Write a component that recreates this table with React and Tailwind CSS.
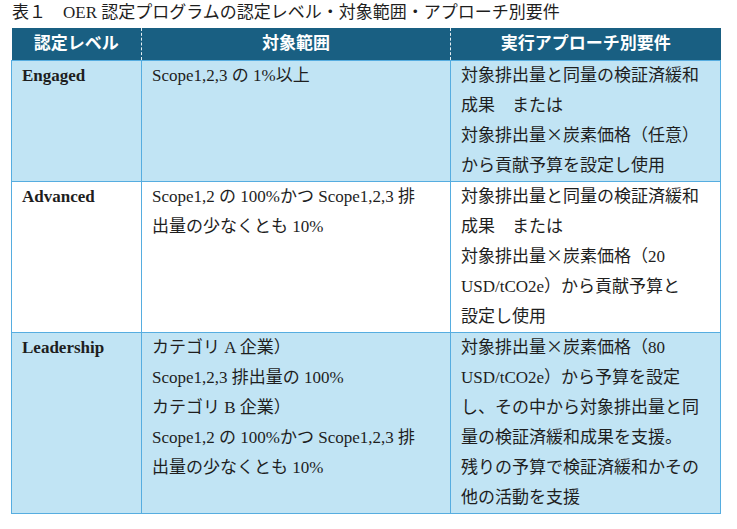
import React from 'react';

const rows = [
  {
    level: 'Engaged',
    bg: 'bg-[#c1e4f4]',
    scope: ['Scope1,2,3 の 1%以上'],
    approach: [
      '対象排出量と同量の検証済緩和',
      '成果　または',
      '対象排出量×炭素価格（任意）',
      'から貢献予算を設定し使用',
    ],
  },
  {
    level: 'Advanced',
    bg: 'bg-white',
    scope: ['Scope1,2 の 100%かつ Scope1,2,3 排', '出量の少なくとも 10%'],
    approach: [
      '対象排出量と同量の検証済緩和',
      '成果　または',
      '対象排出量×炭素価格（20',
      'USD/tCO2e）から貢献予算と',
      '設定し使用',
    ],
  },
  {
    level: 'Leadership',
    bg: 'bg-[#c1e4f4]',
    scope: [
      'カテゴリ A 企業）',
      'Scope1,2,3 排出量の 100%',
      'カテゴリ B 企業）',
      'Scope1,2 の 100%かつ Scope1,2,3 排',
      '出量の少なくとも 10%',
    ],
    approach: [
      '対象排出量×炭素価格（80',
      'USD/tCO2e）から予算を設定',
      'し、その中から対象排出量と同',
      '量の検証済緩和成果を支援。',
      '残りの予算で検証済緩和かその',
      '他の活動を支援',
    ],
  },
];

// the multiplication sign is full-width in the original, so give it the CJK face
const renderLine = (line) =>
  line.split('×').flatMap((part, i) =>
    i === 0
      ? [part]
      : [
          <span key={i} className="leading-none font-['Noto_Sans_CJK_JP',sans-serif]">×</span>,
          part,
        ]
  );

const Lines = ({ items }) => (
  <>
    {items.map((line, i) => (
      <div key={i} className="h-[30px] whitespace-nowrap leading-[30px]">
        {renderLine(line)}
      </div>
    ))}
  </>
);

export default function App() {
  return (
    <div className="w-[737px] h-[529px] bg-white px-[11px] text-[17px] text-[#1e1e1e] font-['Liberation_Serif','Noto_Sans_CJK_JP',serif]">
      {/* Caption */}
      <div className="h-[28px] pl-[1px] leading-[26px] whitespace-nowrap">
        表１　OER 認定プログラムの認定レベル・対象範囲・アプローチ別要件
      </div>

      <table className="w-[709px] table-fixed border-collapse">
        <colgroup>
          <col className="w-[130px]" />
          <col className="w-[309px]" />
          <col className="w-[270px]" />
        </colgroup>
        <thead>
          <tr className="h-[32px] bg-[#195f82] text-white font-bold">
            <th className="border-r border-dashed border-r-[#e6eef2] text-center font-bold">認定レベル</th>
            <th className="border-r border-dashed border-r-[#e6eef2] text-center font-bold">対象範囲</th>
            <th className="text-center font-bold">実行アプローチ別要件</th>
          </tr>
        </thead>
        <tbody>
          {rows.map((row) => (
            <tr key={row.level} className={row.bg}>
              <td className="border border-[#56ade0] px-[10px] align-top font-bold">
                <div className="h-[30px] leading-[30px]">{row.level}</div>
              </td>
              <td className="border border-[#56ade0] px-[10px] align-top">
                <Lines items={row.scope} />
              </td>
              <td className="border border-[#56ade0] px-[10px] align-top">
                <Lines items={row.approach} />
              </td>
            </tr>
          ))}
        </tbody>
      </table>
    </div>
  );
}
